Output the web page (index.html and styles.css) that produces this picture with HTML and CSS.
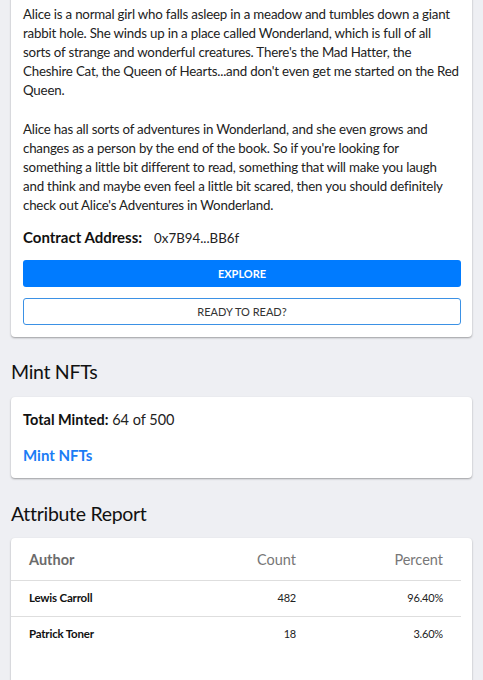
FILE: index.html
```html
<!DOCTYPE html>
<html>
<head>
<meta charset="utf-8">
<link rel="stylesheet" href="styles.css">
</head>
<body>
<main class="page">
  <section class="card card-top">
    <p class="para">Alice is a normal girl who falls asleep in a meadow and tumbles down a giant<br>rabbit hole. She winds up in a place called Wonderland, which is full of all<br>sorts of strange and wonderful creatures. There's the Mad Hatter, the<br>Cheshire Cat, the Queen of Hearts...and don't even get me started on the Red<br>Queen.</p>
    <p class="para">Alice has all sorts of adventures in Wonderland, and she even grows and<br>changes as a person by the end of the book. So if you're looking for<br>something a little bit different to read, something that will make you laugh<br>and think and maybe even feel a little bit scared, then you should definitely<br>check out Alice's Adventures in Wonderland.</p>
    <div class="contract"><strong>Contract Address:</strong><span class="addr">0x7B94...BB6f</span></div>
    <button class="btn btn-primary">EXPLORE</button>
    <button class="btn btn-outline">READY TO READ?</button>
  </section>

  <h2 class="section-title">Mint NFTs</h2>
  <section class="card card-mint">
    <div class="minted"><strong>Total Minted:</strong> 64 of 500</div>
    <a class="mint-link" href="#">Mint NFTs</a>
  </section>

  <h2 class="section-title title-attr">Attribute Report</h2>
  <section class="card card-table">
    <table class="report">
      <thead>
        <tr><th class="c-author">Author</th><th class="c-num">Count</th><th class="c-pct">Percent</th></tr>
      </thead>
      <tbody>
        <tr><td class="c-author">Lewis Carroll</td><td class="c-num">482</td><td class="c-pct">96.40%</td></tr>
        <tr><td class="c-author">Patrick Toner</td><td class="c-num">18</td><td class="c-pct">3.60%</td></tr>
      </tbody>
    </table>
  </section>
</main>
</body>
</html>
```

FILE: styles.css
```css
* { box-sizing: border-box; }
html, body { margin: 0; padding: 0; }
body {
  background: #eeeff3;
  font-family: "Lato", "Noto Sans", sans-serif;
  color: #212529;
  overflow: hidden;
}
.page {
  padding: 0 11px 40px 11px;
  width: 483px;
}
.card {
  background: #fff;
  border-radius: 4px;
  box-shadow: 0 1px 2px rgba(0,0,0,0.35);
}
.card-top {
  margin-top: -10px;
  padding: 15px 11px 12px 12px;
}
.para {
  margin: 0 0 20px 0;
  font-size: 13.3px;
  letter-spacing: -0.2px;
  line-height: 19px;
  color: #222;
  white-space: nowrap;
}
.para + .para { margin-bottom: 12px; }
.contract {
  font-size: 15px;
  line-height: 20px;
  color: #111;
  margin-bottom: 12px;
}
.contract strong { font-weight: 700; }
.addr { margin-left: 12px; font-size: 13.3px; color: #222; }
.btn {
  display: block;
  width: 100%;
  height: 27px;
  border-radius: 3px;
  font-family: "Lato", sans-serif;
  font-size: 11px;
  cursor: pointer;
}
.btn-primary {
  background: #007bff;
  color: #fff;
  border: none;
  font-weight: 700;
  margin-bottom: 11px;
}
.btn-outline {
  background: #fff;
  color: #333;
  border: 1px solid #3b91e5;
}
.section-title {
  margin: 22px 0 0 0;
  font-size: 19.5px;
  letter-spacing: -0.3px;
  font-weight: 400;
  line-height: 26px;
  color: #111;
  height: 38px;
}
.title-attr { margin-top: 23px; height: 37px; }
.card-mint {
  padding: 13px 12px 12px 12px;
  font-size: 14.5px;
  line-height: 20px;
}
.minted { color: #222; margin-bottom: 15px; }
.minted strong { color: #111; }
.mint-link {
  color: #1a7cf5;
  font-weight: 700;
  font-size: 15px;
  text-decoration: none;
  display: inline-block;
}
.card-table {
  height: 160px;
  padding: 0 10px 0 0;
}
.report {
  width: 450px;
  border-collapse: collapse;
  table-layout: fixed;
}
.report th {
  height: 42px;
  padding: 1px 18px 0 18px;
  font-size: 14.5px;
  color: #777;
  font-weight: 400;
  border-bottom: 1px solid #dedede;
}
.report th.c-author { font-weight: 700; color: #6b6b6b; text-align: left; }
.report td {
  height: 36px;
  padding: 0 18px 2px 18px;
  font-size: 11px;
  letter-spacing: -0.2px;
  color: #222;
  border-bottom: 1px solid #dedede;
}
.report tbody tr:last-child td { border-bottom: none; }
.report td.c-author { font-weight: 700; color: #111; font-size: 11.5px; letter-spacing: -0.2px; }
.c-author { width: 153px; text-align: left; }
.c-num { width: 150px; text-align: right; }
.c-pct { width: 147px; text-align: right; }
```
